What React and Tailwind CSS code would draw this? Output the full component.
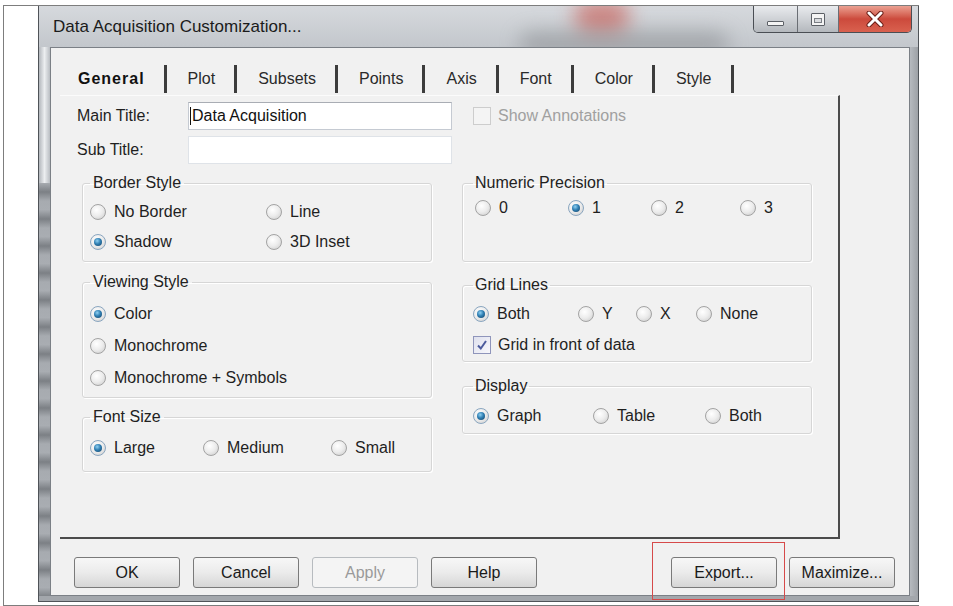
import React from 'react';

const font = { fontFamily: '"Liberation Sans", Arial, sans-serif' };

const tabs = ['General', 'Plot', 'Subsets', 'Points', 'Axis', 'Font', 'Color', 'Style'];

function Radio({ on }) {
  return (
    <span
      className={`inline-flex h-[16px] w-[16px] shrink-0 items-center justify-center rounded-full border ${
        on ? 'border-[#8aa6c0]' : 'border-[#a3a3a3]'
      } bg-[radial-gradient(circle_at_40%_35%,#ffffff_0%,#ececec_50%,#c8c8c8_100%)]`}
    >
      {on && (
        <span className="h-[8px] w-[8px] rounded-full bg-[radial-gradient(circle_at_40%_35%,#8fd0f2_0%,#2f7fb3_45%,#143f62_100%)]" />
      )}
    </span>
  );
}

function Option({ on, label, w }) {
  return (
    <div className="flex items-center gap-[8px]" style={w ? { width: w } : undefined}>
      <Radio on={on} />
      <span>{label}</span>
    </div>
  );
}

function Check({ on, disabled }) {
  return (
    <span
      className={`inline-flex h-[18px] w-[18px] shrink-0 items-center justify-center border ${
        disabled ? 'border-[#cdcdcd] bg-[#f4f4f4]' : 'border-[#8f95bb] bg-gradient-to-br from-[#dfe1ee] to-[#f7f7fb]'
      }`}
    >
      {on && (
        <svg width="12" height="12" viewBox="0 0 12 12">
          <path d="M2 6.5 L4.8 9.5 L10 2" fill="none" stroke="#4b5a9c" strokeWidth="2" />
        </svg>
      )}
    </span>
  );
}

function Group({ title, children, className = '', pad = 'px-[7px]', legendPad = 'px-[3px]' }) {
  return (
    <fieldset
      className={`rounded-[3px] border border-[#d6d6d6] shadow-[inset_1px_1px_0_#ffffff,1px_1px_0_#ffffff] ${pad} ${className}`}
    >
      <legend className={`${legendPad} leading-[18px] text-[#222]`}>{title}</legend>
      {children}
    </fieldset>
  );
}

function Button({ children, disabled }) {
  return (
    <button
      className={`h-[31px] w-[106px] rounded-[3px] border text-[16px] ${
        disabled
          ? 'border-[#b7bbbf] bg-[#f4f4f4] text-[#9a9a9a]'
          : 'border-[#7a7a7a] bg-gradient-to-b from-[#f7f7f7] via-[#ebebeb] to-[#d6d6d6] text-[#1a1a1a]'
      }`}
    >
      {children}
    </button>
  );
}

function CaptionButtons() {
  return (
    <div className="flex h-[27px] overflow-hidden rounded-b-[5px] border border-t-0 border-[#4a4e54]">
      {/* minimize */}
      <div className="flex w-[44px] items-end justify-center border-r border-[#6a6e74] bg-gradient-to-b from-[#e9ebee] via-[#cfd2d6] to-[#b4b8bd] pb-[6px]">
        <span className="h-[5px] w-[17px] rounded-[1px] border border-[#5c6066] bg-[#f4f4f4]" />
      </div>
      {/* maximize */}
      <div className="flex w-[41px] items-center justify-center border-r border-[#6a6e74] bg-gradient-to-b from-[#e9ebee] via-[#cfd2d6] to-[#b4b8bd]">
        <span className="h-[13px] w-[14px] rounded-[1px] border border-[#5c6066] bg-[#f4f4f4] p-[2px] pt-[4px]">
          <span className="block h-full w-full border border-[#7a7e84] bg-[#d9dbde]" />
        </span>
      </div>
      {/* close */}
      <div className="flex w-[72px] items-center justify-center bg-gradient-to-b from-[#eaa092] via-[#cc4a3c] to-[#d9614f]">
        <svg width="18" height="16" viewBox="0 0 18 16">
          <path d="M3 2 L15 14 M15 2 L3 14" stroke="#6b1e16" strokeWidth="5" strokeLinecap="round" />
          <path d="M3 2 L15 14 M15 2 L3 14" stroke="#ffffff" strokeWidth="3" strokeLinecap="round" />
        </svg>
      </div>
    </div>
  );
}

export default function App() {
  return (
    <div className="relative h-[606px] w-[953px] overflow-hidden bg-white pl-[3px] pt-[5px] text-[16px] text-[#1f1f1f]" style={font}>
      {/* page frame */}
      <div className="h-[601px] w-[916px] border-b border-l border-t border-[#7d7d7d]">
        {/* dialog window */}
        <div className="ml-[34px] flex h-[596px] w-[881px] flex-col border-x border-b border-[#4f5358] bg-[#c4c8cd]">
          {/* title bar */}
          <div className="relative flex h-[41px] justify-between overflow-hidden bg-gradient-to-b from-[#d6d9dd] to-[#c3c7cc]">
            <div className="absolute left-[535px] top-[-6px] h-[34px] w-[56px] rounded-full bg-[#c8524a] opacity-60 blur-[10px]" />
            <div className="absolute left-[480px] top-[26px] h-[24px] w-[210px] rounded-full bg-[#8a8d91] opacity-60 blur-[10px]" />
            <span className="relative pl-[14px] pt-[11px] text-[17px] leading-[20px] text-[#1b1b1b]">
              Data Acquisition Customization...
            </span>
            <div className="relative mr-[6px]">
              <CaptionButtons />
            </div>
          </div>

          <div className="flex flex-1">
            {/* left frame */}
            <div className="flex w-[11px] flex-col">
              <div className="h-[136px] bg-gradient-to-r from-[#b3b7bc] via-[#eceef0] to-[#b9bdc2]" />
              <div className="flex-1 bg-[repeating-linear-gradient(180deg,#a7abb0_0px,#7c8085_9px,#a7abb0_18px,#a9adb2_27px)]" />
            </div>

            {/* client area */}
            <div className="flex flex-1 flex-col border border-[#7b8086] bg-[#f1f1f1] pt-[17px]">
              {/* tab strip */}
              <div className="ml-[9px] flex h-[30px] items-center pb-[2px] pl-[18px]">
                {tabs.map((t, i) => (
                  <div key={t} className="flex items-center">
                    <span className={i === 0 ? 'font-bold tracking-[1px] text-[#111]' : 'text-[#2a2a2a]'}>{t}</span>
                    <span className="ml-[19px] mr-[21px] h-[28px] w-[3px] bg-[#3c3c3c]" />
                  </div>
                ))}
              </div>

              {/* tab page */}
              <div className="ml-[9px] h-[444px] w-[780px] border-b-2 border-r-2 border-t border-[#4b4b4b] border-t-[#fbfbfb] pl-[17px] pt-[6px]">
                <div className="flex h-[28px] items-center">
                  <span className="w-[111px]">Main Title:</span>
                  <div className="flex h-[28px] w-[264px] items-center border border-[#c5cad2] border-t-[#a9adb4] bg-white pl-[1px]">
                    <span className="mr-[1px] h-[18px] w-[1px] bg-[#111]" />
                    <span className="text-[#111]">Data Acquisition</span>
                  </div>
                  <div className="ml-[21px] flex items-center gap-[7px] text-[#a0a0a0]">
                    <Check disabled />
                    <span>Show Annotations</span>
                  </div>
                </div>
                <div className="mt-[6px] flex h-[28px] items-center">
                  <span className="w-[111px]">Sub Title:</span>
                  <div className="h-[28px] w-[264px] border border-[#dfe3e8] bg-white" />
                </div>

                <div className="ml-[5px] mt-[10px] flex gap-[30px]">
                  {/* left column */}
                  <div className="flex w-[350px] flex-col">
                    <Group title="Border Style" className="pb-[4px]">
                      <div className="grid grid-cols-[176px_1fr] pt-[5px]">
                        <div className="flex h-[30px] items-center"><Option label="No Border" /></div>
                        <div className="flex h-[30px] items-center"><Option label="Line" /></div>
                        <div className="flex h-[30px] items-center"><Option on label="Shadow" /></div>
                        <div className="flex h-[30px] items-center"><Option label="3D Inset" /></div>
                      </div>
                    </Group>
                    <Group title="Viewing Style" className="mt-[11px] pb-[3px]">
                      <div className="pt-[7px]">
                        <div className="flex h-[32px] items-center"><Option on label="Color" /></div>
                        <div className="flex h-[32px] items-center"><Option label="Monochrome" /></div>
                        <div className="flex h-[32px] items-center"><Option label="Monochrome + Symbols" /></div>
                      </div>
                    </Group>
                    <Group title="Font Size" className="mt-[10px] pb-[8px]">
                      <div className="mt-[7px] flex h-[30px] items-center">
                        <Option on label="Large" w={113} />
                        <Option label="Medium" w={128} />
                        <Option label="Small" />
                      </div>
                    </Group>
                  </div>

                  {/* right column */}
                  <div className="flex w-[350px] flex-col">
                    <Group title="Numeric Precision" pad="px-[10px]" legendPad="px-[2px]" className="pb-[38px]">
                      <div className="ml-[2px] mt-[1px] flex h-[30px] items-center">
                        <Option label="0" w={93} />
                        <Option on label="1" w={83} />
                        <Option label="2" w={89} />
                        <Option label="3" />
                      </div>
                    </Group>
                    <Group title="Grid Lines" pad="px-[10px]" legendPad="px-[2px]" className="mt-[14px]">
                      <div className="mt-[5px] flex h-[30px] items-center">
                        <Option on label="Both" w={105} />
                        <Option label="Y" w={58} />
                        <Option label="X" w={60} />
                        <Option label="None" />
                      </div>
                      <div className="flex h-[32px] items-center gap-[7px]">
                        <Check on />
                        <span>Grid in front of data</span>
                      </div>
                    </Group>
                    <Group title="Display" pad="px-[10px]" legendPad="px-[2px]" className="mt-[15px] pb-[2px]">
                      <div className="mt-[6px] flex h-[30px] items-center">
                        <Option on label="Graph" w={120} />
                        <Option label="Table" w={112} />
                        <Option label="Both" />
                      </div>
                    </Group>
                  </div>
                </div>
              </div>

              {/* dialog buttons */}
              <div className="mt-[18px] flex pl-[23px]">
                <div className="flex gap-[13px]">
                  <Button>OK</Button>
                  <Button>Cancel</Button>
                  <Button disabled>Apply</Button>
                  <Button>Help</Button>
                </div>
                <div className="ml-[134px] flex gap-[12px]">
                  <Button>Export...</Button>
                  <Button>Maximize...</Button>
                </div>
              </div>
            </div>

            {/* right frame */}
            <div className="w-[8px] bg-gradient-to-r from-[#b6babf] to-[#9da1a6]" />
          </div>
          <div className="h-[5px] bg-[#a3a7ac]" />
        </div>
      </div>

      {/* highlight around Export */}
      <div className="absolute left-[652px] top-[542px] h-[58px] w-[133px] border border-[#d64a4a]" />
    </div>
  );
}
